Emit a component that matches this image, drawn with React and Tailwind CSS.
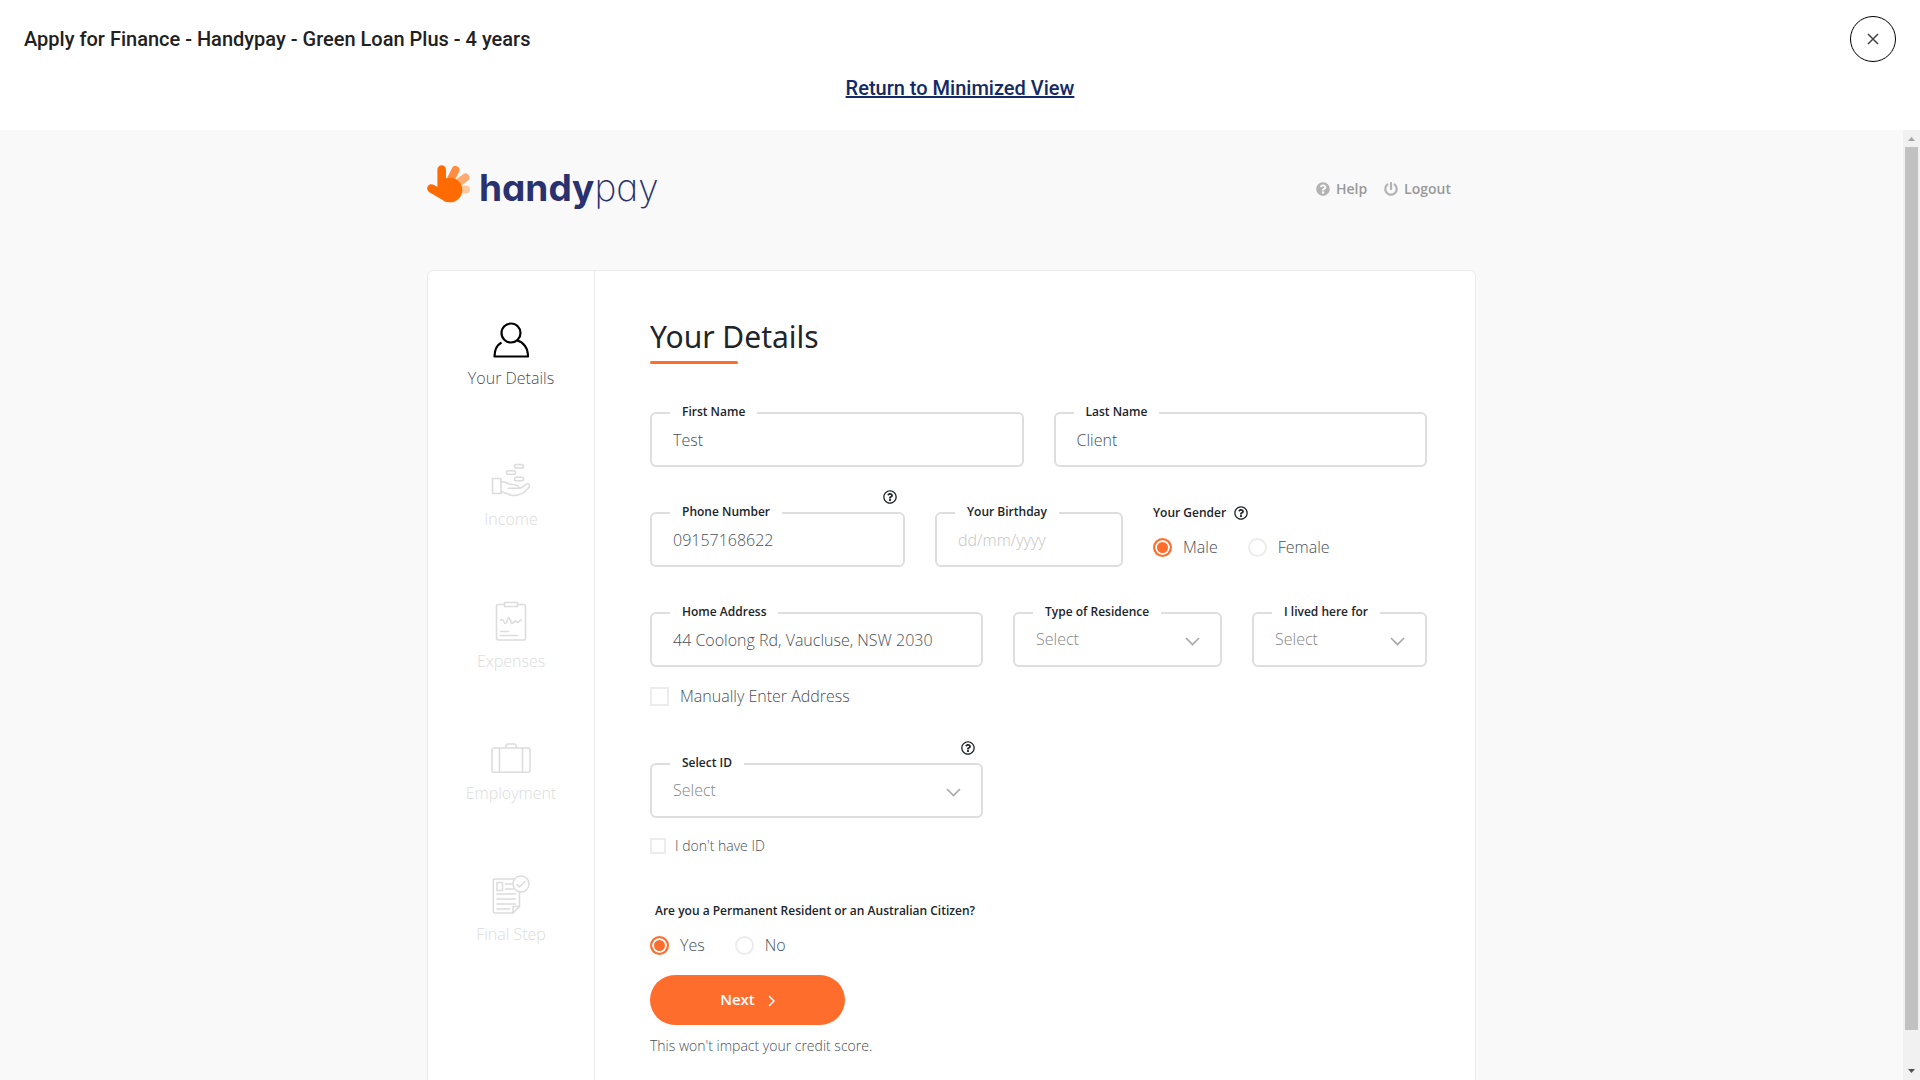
import React, { useState } from "react";
import { FaPowerOff, FaQuestionCircle, FaRegQuestionCircle } from "react-icons/fa";

const UserIcon = () => (
  <svg width="40" height="37" viewBox="0 0 40 37" fill="none" stroke="#000" strokeWidth="2.2">
    <circle cx="20" cy="12" r="9.5" />
    <path d="M10.5 21.5 C6 24 3.5 29 3.5 35.5 H37 C37 27 32.5 21 26 19.5" strokeLinejoin="round" />
  </svg>
);

const IncomeIcon = () => (
  <svg width="40" height="39" viewBox="0 0 40 39" fill="none" stroke="#dcdcdc" strokeWidth="1.6" strokeLinejoin="round" strokeLinecap="round">
    <rect x="23.5" y="4.5" width="9" height="3.5" rx="1.75" />
    <rect x="15.5" y="10.8" width="9" height="3.5" rx="1.75" />
    <rect x="23.5" y="17.2" width="9" height="3.5" rx="1.75" />
    <rect x="1.5" y="18.5" width="8.5" height="15" />
    <path d="M10 21.8 C14 21.2 16 23.5 19 24.2 C22 24.8 28 23.8 28 28.2 H17.5" />
    <path d="M28 28.2 C32 28.2 33.5 24.2 36.5 23.8 C39 24 38.8 26.6 37.5 28 C33.5 32.5 28 36 22 35.5 C17 35 14 31.8 10 31.8" />
  </svg>
);

const ExpensesIcon = () => (
  <svg width="40" height="40" viewBox="0 0 40 40" fill="none" stroke="#dcdcdc" strokeWidth="1.6" strokeLinejoin="round" strokeLinecap="round">
    <path d="M13.5 3.5 H7.5 Q5.5 3.5 5.5 5.5 V37 Q5.5 39 7.5 39 H32.5 Q34.5 39 34.5 37 V5.5 Q34.5 3.5 32.5 3.5 H26.5" />
    <rect x="13.5" y="1.5" width="13" height="4" />
    <path d="M9.5 19 H11.5 C13 19 13 22.5 14.5 22.5 C16.5 22.5 16 16.5 17.8 16.5 C19.5 16.5 19.5 22.5 21.3 22.5 C23 22.5 22.5 20 24 20 C25.3 20 25 21.5 26.5 21.5 C28 21.5 28 19 30.5 19" />
    <path d="M9.5 30.5 H17.5 M9.5 34.5 H26.5" />
  </svg>
);

const EmploymentIcon = () => (
  <svg width="40" height="30" viewBox="0 0 40 30" fill="none" stroke="#dcdcdc" strokeWidth="1.6" strokeLinejoin="round">
    <rect x="1" y="5" width="38" height="24.2" rx="2" />
    <path d="M8.5 5 V29 M31.5 5 V29" />
    <path d="M15 5 V2.8 Q15 1 16.8 1 H23.2 Q25 1 25 2.8 V5" />
  </svg>
);

const FinalIcon = () => (
  <svg width="40" height="39" viewBox="0 0 40 39" fill="none" stroke="#dcdcdc" strokeWidth="1.5" strokeLinejoin="round" strokeLinecap="round">
    <path d="M23.5 4 H4 Q2.3 4 2.3 5.5 V36.5 Q2.3 38 4 38 H22 L28.5 31.5 V17" />
    <path d="M22 38 V31.5 H28.5" />
    <rect x="6" y="7.5" width="5.5" height="8" />
    <path d="M14.5 9 H21.5 M14.5 14 H22.5 M6 19 H24.5 M6 24 H24.5 M6 29 H24.5 M6 34 H18.5" />
    <circle cx="30" cy="9" r="8" />
    <path d="M26 9.5 L28.5 12 L34 6.5" />
  </svg>
);

const steps = [
  { label: "Your Details", Icon: UserIcon, active: true },
  { label: "Income", Icon: IncomeIcon },
  { label: "Expenses", Icon: ExpensesIcon },
  { label: "Employment", Icon: EmploymentIcon },
  { label: "Final Step", Icon: FinalIcon },
];

const Logo = () => (
  <a href="#" className="flex items-start gap-2 text-[#29316f]">
    <svg width="44" height="39" viewBox="0 -1 44 39" strokeLinecap="round" className="shrink-0">
      <path d="M36 24.5 H39" stroke="#ffc9a0" strokeWidth="8" />
      <path d="M28 20 L38.5 12.5" stroke="#ffab70" strokeWidth="8" />
      <path d="M21 20 L28.5 5" stroke="#ff8d40" strokeWidth="8" />
      <path d="M14.7 4.5 V22 M4.5 23.5 L20 32.5" stroke="#ff6b00" strokeWidth="8.6" />
      <circle cx="23" cy="25" r="12.3" fill="#ff6b00" />
    </svg>
    <span className="font-['Inter',sans-serif] text-[37px] leading-[48px] [font-feature-settings:'cv11']">
      <span className="font-bold">handy</span>
      <span className="font-extralight">pay</span>
    </span>
  </a>
);

const HelpButton = ({ label, className = "" }) => (
  <button type="button" aria-label={label} className={`text-[#212529] ${className}`}>
    <FaRegQuestionCircle size={14} />
  </button>
);

const Field = ({ id, label, help, children }) => (
  <div className="relative h-[55px] rounded-md border-2 border-[#dedede] bg-white">
    <label htmlFor={id} className="absolute -top-[10px] left-[18px] bg-white px-3 text-xs leading-4 font-semibold whitespace-nowrap text-[#212529]">
      {label}
    </label>
    {help && <HelpButton label={help} className="absolute -top-[24px] right-[6px]" />}
    {children}
  </div>
);

const TextField = ({ id, label, help, ...props }) => (
  <Field id={id} label={label} help={help}>
    <input
      id={id}
      className="h-full w-full rounded-md bg-transparent px-[21px] text-base font-light text-[#495057] outline-none placeholder:text-[#c4c4c4]"
      {...props}
    />
  </Field>
);

const SelectField = ({ id, label, help, options }) => (
  <Field id={id} label={label} help={help}>
    <select id={id} defaultValue="" className="h-full w-full appearance-none rounded-md bg-transparent px-[21px] pb-[2px] text-base font-light text-[#868686] outline-none">
      <option value="">Select</option>
      {options.map((o) => (
        <option key={o}>{o}</option>
      ))}
    </select>
    <svg width="15" height="9" viewBox="0 0 15 9" fill="none" stroke="#a8a8a8" strokeWidth="1.6" className="pointer-events-none absolute top-[23px] right-[20px]">
      <path d="M1 1 L7.5 7.5 L14 1" />
    </svg>
  </Field>
);

const Radio = ({ name, label, checked, onChange }) => (
  <label className="flex items-center gap-[11px] text-base font-light text-[#495057]">
    <input
      type="radio"
      name={name}
      checked={checked}
      onChange={onChange}
      className="size-[19px] appearance-none rounded-full border-2 border-[#ececec] bg-white checked:border-[#ff6d2d] checked:bg-[#ff6d2d] checked:shadow-[inset_0_0_0_2px_white]"
    />
    {label}
  </label>
);

const App = () => {
  const [gender, setGender] = useState("Male");
  const [resident, setResident] = useState("Yes");

  return (
    <div className="flex h-screen flex-col overflow-hidden bg-white font-['Open_Sans',sans-serif]">
      <header className="h-[130px] shrink-0 px-6 pt-4 font-['Roboto',sans-serif] text-xl font-medium">
        <div className="flex items-center justify-between">
          <h1 className="text-[#212121]">Apply for Finance - Handypay - Green Loan Plus - 4 years</h1>
          <button type="button" aria-label="Close" className="flex size-[46px] items-center justify-center rounded-full border border-black">
            <svg width="12" height="12" viewBox="0 0 12 12" stroke="#444" strokeWidth="1.5">
              <path d="M1 1 L11 11 M11 1 L1 11" />
            </svg>
          </button>
        </div>
        <div className="mt-3 text-center">
          <a href="#" className="text-[#132a66] underline">Return to Minimized View</a>
        </div>
      </header>

      <div className="flex min-h-0 flex-1">
        <main className="flex-1 overflow-hidden bg-[#f9f9f9]">
          <div className="mx-auto flex w-full max-w-[1049px] flex-col">
            <div className="flex h-[140px] items-start justify-between pt-[34px] pr-[25px]">
              <Logo />
              <nav className="flex gap-[17px] pt-[15px] text-sm font-semibold text-[#999]">
                <a href="#" className="flex items-center gap-[6px]">
                  <FaQuestionCircle size={14} className="text-[#b3b3b3]" />
                  Help
                </a>
                <a href="#" className="flex items-center gap-[6px]">
                  <FaPowerOff size={14} className="text-[#b3b3b3]" />
                  Logout
                </a>
              </nav>
            </div>

            <div className="flex min-h-[900px] rounded-md border border-[#ebebeb] bg-white">
              <aside className="w-[167px] shrink-0 border-r border-[#ebebeb] pt-[50px]">
                <ol className="flex flex-col gap-[70px]">
                  {steps.map(({ label, Icon, active }) => (
                    <li key={label} className="flex flex-col items-center gap-2">
                      <Icon />
                      <span className={active ? "text-base font-light text-[#495057]" : "text-base font-light text-[#dcdcdc]"}>{label}</span>
                    </li>
                  ))}
                </ol>
              </aside>

              <form className="flex-1 pt-[44px] pr-12 pb-12 pl-[55px]" onSubmit={(e) => e.preventDefault()}>
                <h2 className="font-['Noto_Sans',sans-serif] text-[30px] leading-[44px] text-[#212529]">Your Details</h2>
                <div className="mt-[2px] h-[3px] w-[88px] rounded-sm bg-[#ff6d2d]" />

                <div className="mt-12 grid grid-cols-2 gap-[30px]">
                  <TextField id="firstName" label="First Name" defaultValue="Test" />
                  <TextField id="lastName" label="Last Name" defaultValue="Client" />
                </div>

                <div className="mt-[45px] grid grid-cols-[255fr_188fr_274fr] gap-[30px]">
                  <TextField id="phone" label="Phone Number" help="About phone number" defaultValue="09157168622" />
                  <TextField id="birthday" label="Your Birthday" placeholder="dd/mm/yyyy" />
                  <fieldset>
                    <div className="-mt-[7px] flex items-center gap-2">
                      <legend className="text-xs leading-4 font-semibold text-[#212529]">Your Gender</legend>
                      <HelpButton label="About gender" />
                    </div>
                    <div className="mt-[14px] flex gap-[30px]">
                      <Radio name="gender" label="Male" checked={gender === "Male"} onChange={() => setGender("Male")} />
                      <Radio name="gender" label="Female" checked={gender === "Female"} onChange={() => setGender("Female")} />
                    </div>
                  </fieldset>
                </div>

                <div className="mt-[45px] grid grid-cols-[333fr_209fr_175fr] gap-[30px]">
                  <TextField id="address" label="Home Address" defaultValue="44 Coolong Rd, Vaucluse, NSW 2030" />
                  <SelectField id="residence" label="Type of Residence" options={["Own", "Mortgage", "Rent"]} />
                  <SelectField id="livedFor" label="I lived here for" options={["1 year", "2 years", "3+ years"]} />
                </div>
                <label className="mt-[17px] flex w-fit items-center gap-[11px] text-base font-light text-[#495057]">
                  <input type="checkbox" className="size-[19px] appearance-none border-2 border-[#ececec] bg-white checked:bg-[#ff6d2d]" />
                  Manually Enter Address
                </label>

                <div className="mt-[55px] grid grid-cols-[333fr_414fr] gap-[30px]">
                  <SelectField id="idType" label="Select ID" help="About ID" options={["Driver Licence", "Passport", "Medicare Card"]} />
                </div>
                <label className="mt-[18px] flex w-fit items-center gap-[9px] text-sm font-light text-[#495057]">
                  <input type="checkbox" className="size-4 appearance-none border-2 border-[#ececec] bg-white checked:bg-[#ff6d2d]" />
                  I don't have ID
                </label>

                <fieldset className="mt-[47px]">
                  <legend className="px-[5px] text-xs leading-4 font-semibold text-[#212529]">Are you a Permanent Resident or an Australian Citizen?</legend>
                  <div className="mt-[14px] flex gap-[30px]">
                    <Radio name="resident" label="Yes" checked={resident === "Yes"} onChange={() => setResident("Yes")} />
                    <Radio name="resident" label="No" checked={resident === "No"} onChange={() => setResident("No")} />
                  </div>
                </fieldset>

                <button type="submit" className="mt-[18px] flex h-[50px] w-[195px] items-center justify-center gap-[13px] rounded-full bg-[#ff6d2d] pb-[2px] text-[15px] font-semibold text-white">
                  Next
                  <svg width="7" height="12" viewBox="0 0 7 12" fill="none" stroke="currentColor" strokeWidth="1.5" className="mt-1">
                    <path d="M1 1 L6 6 L1 11" />
                  </svg>
                </button>
                <p className="mt-[11px] text-sm font-light text-[#495057]">This won't impact your credit score.</p>
              </form>
            </div>
          </div>
        </main>

        {/* Scrollbar track */}
        <div className="flex w-[17px] flex-col items-center justify-between bg-[#f1f1f1]">
          <svg width="17" height="17" viewBox="0 0 17 17" fill="#a3a3a3" className="shrink-0">
            <path d="M5 11 H12 L8.5 7 Z" />
          </svg>
          <div className="mb-[33px] w-[13px] flex-1 bg-[#c1c1c1]" />
          <svg width="17" height="17" viewBox="0 0 17 17" fill="#505050" className="shrink-0">
            <path d="M5 6 H12 L8.5 10 Z" />
          </svg>
        </div>
      </div>
    </div>
  );
};

export default App;
